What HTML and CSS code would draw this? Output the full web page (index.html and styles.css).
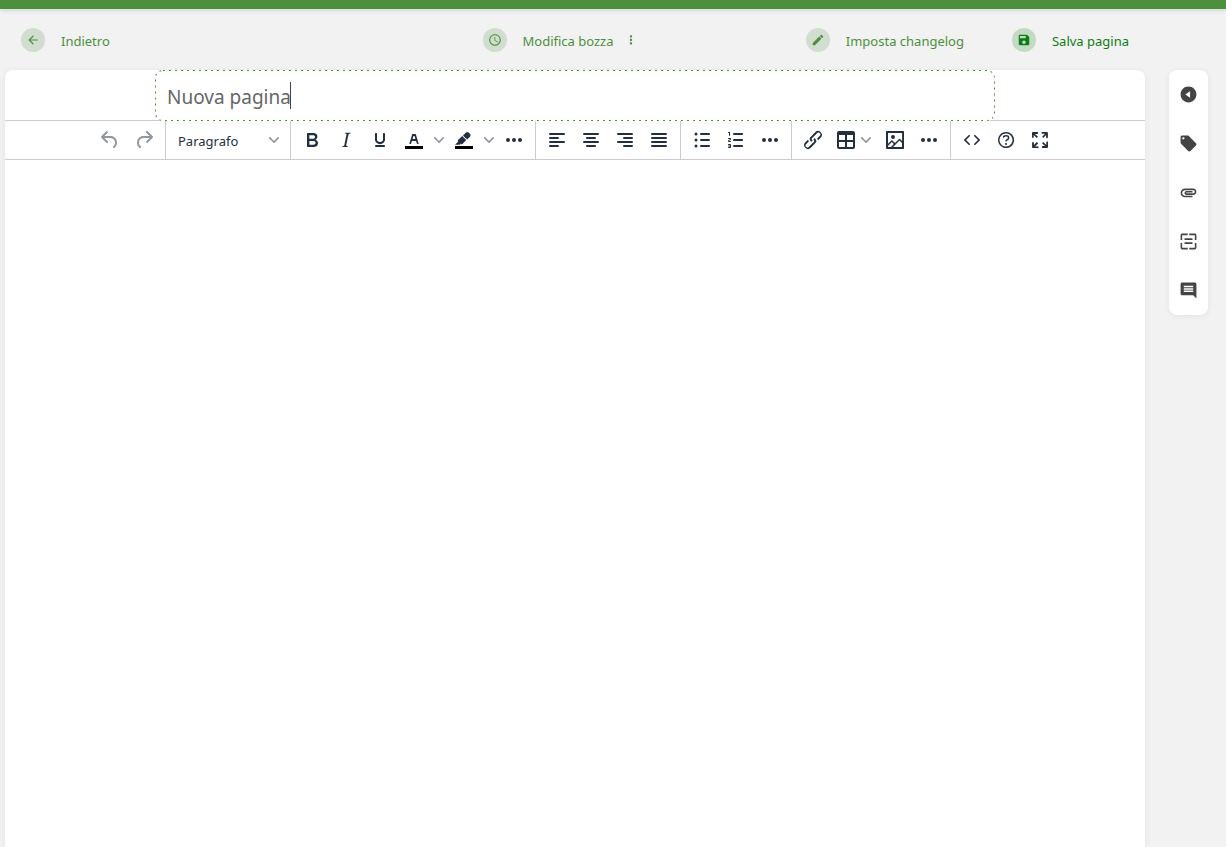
FILE: index.html
```
<!DOCTYPE html>
<html lang="it">
<head>
    <meta charset="UTF-8">
    <title>Nuova pagina</title>
    <link rel="stylesheet" href="styles.css">
</head>
<body>
    <header class="header"></header>

    <form class="page-editor">
        <div class="page-toolbar">
            <div class="toolbar-left">
                <a href="#" class="text-button">
                    <span class="circle"><svg viewBox="0 0 24 24"><path d="M20 11H7.83l5.59-5.59L12 4l-8 8 8 8 1.41-1.41L7.83 13H20v-2z"/></svg></span>
                    <span class="label">Indietro</span>
                </a>
            </div>
            <div class="toolbar-center">
                <button type="button" class="text-button">
                    <span class="circle"><svg viewBox="0 0 24 24"><path d="M11.99 2C6.47 2 2 6.48 2 12s4.47 10 9.99 10C17.52 22 22 17.52 22 12S17.52 2 11.99 2zM12 20c-4.42 0-8-3.58-8-8s3.58-8 8-8 8 3.58 8 8-3.58 8-8 8zm.5-13H11v6l5.25 3.15.75-1.23-4.5-2.67z"/></svg></span>
                    <span class="label">Modifica bozza</span>
                </button>
                <button type="button" class="more-button" aria-label="Altre opzioni">
                    <svg viewBox="0 0 24 24"><path d="M12 8c1.1 0 2-.9 2-2s-.9-2-2-2-2 .9-2 2 .9 2 2 2zm0 2c-1.1 0-2 .9-2 2s.9 2 2 2 2-.9 2-2-.9-2-2-2zm0 6c-1.1 0-2 .9-2 2s.9 2 2 2 2-.9 2-2-.9-2-2-2z"/></svg>
                </button>
            </div>
            <div class="toolbar-right">
                <button type="button" class="text-button">
                    <span class="circle"><svg viewBox="0 0 24 24"><path d="M3 17.25V21h3.75L17.81 9.94l-3.75-3.75L3 17.25zM20.71 7.04c.39-.39.39-1.02 0-1.41l-2.34-2.34c-.39-.39-1.02-.39-1.41 0l-1.83 1.83 3.75 3.75 1.83-1.83z"/></svg></span>
                    <span class="label">Imposta changelog</span>
                </button>
                <button type="submit" class="text-button save">
                    <span class="circle"><svg viewBox="0 0 24 24"><path d="M17 3H5c-1.11 0-2 .9-2 2v14c0 1.1.89 2 2 2h14c1.1 0 2-.9 2-2V7l-4-4zm-5 16c-1.66 0-3-1.34-3-3s1.34-3 3-3 3 1.34 3 3-1.34 3-3 3zm3-10H5V5h10v4z"/></svg></span>
                    <span class="label">Salva pagina</span>
                </button>
            </div>
        </div>

        <div class="workspace">
            <main class="editor-card">
                <div class="title-input">
                    <input type="text" name="name" value="Nuova pagina" aria-label="Titolo">
                    <svg class="title-outline"><rect width="100%" height="100%" rx="8"/></svg>
                    <span class="caret"></span>
                </div>

                <div class="tox-toolbar" role="toolbar">
                    <div class="tox-group">
                        <button type="button" class="tox-btn" aria-label="Annulla" disabled><svg viewBox="0 0 24 24"><path d="M6.4 8H12c3.7 0 6.2 2 6.8 5.1.6 2.7-.4 5.6-2.3 6.8a1 1 0 01-1-1.8c1.1-.6 1.8-2.7 1.4-4.6-.5-2.1-2.1-3.5-4.9-3.5H6.4l3.3 3.3a1 1 0 11-1.4 1.4l-5-5a1 1 0 010-1.4l5-5a1 1 0 011.4 1.4L6.4 8z"/></svg></button>
                        <button type="button" class="tox-btn" aria-label="Ripeti" disabled><svg viewBox="0 0 24 24"><path d="M17.6 10H12c-2.8 0-4.4 1.4-4.9 3.5-.4 2 .3 4 1.4 4.6a1 1 0 11-1 1.8c-2-1.2-2.9-4.1-2.3-6.8.6-3 3-5.1 6.8-5.1h5.6l-3.3-3.3a1 1 0 111.4-1.4l5 5a1 1 0 010 1.4l-5 5a1 1 0 01-1.4-1.4l3.3-3.3z"/></svg></button>
                    </div>
                    <div class="tox-group">
                        <div class="tox-select">
                            <select name="format" aria-label="Formato">
                                <option>Paragrafo</option>
                            </select>
                            <svg class="chevron" viewBox="0 0 10 10"><path d="M8.7 2.2c.3-.3.8-.3 1 0 .4.4.4.9 0 1.2L5.7 7.8c-.3.3-.9.3-1.2 0L.2 3.4a.8.8 0 010-1.2c.3-.3.8-.3 1.1 0L5 6l3.7-3.8z"/></svg>
                        </div>
                    </div>
                    <div class="tox-group">
                        <button type="button" class="tox-btn" aria-label="Grassetto"><svg viewBox="0 0 24 24"><path fill-rule="evenodd" d="M7.8 19c-.3 0-.5 0-.6-.2l-.2-.5V5.7c0-.2 0-.4.2-.5l.6-.2h5c1.5 0 2.7.3 3.5 1 .7.6 1.1 1.4 1.1 2.5a3 3 0 01-.6 1.9c-.4.6-1 1-1.6 1.2.4.1.9.3 1.3.6s.8.7 1 1.2c.4.4.5 1 .5 1.6 0 1.3-.4 2.3-1.3 3-.8.7-2.1 1-3.8 1H7.8zm5-8.3c.6 0 1.2-.1 1.6-.5.4-.3.6-.7.6-1.3 0-1.1-.8-1.7-2.3-1.7H9.3v3.5h3.4zm.5 6c.7 0 1.3-.1 1.7-.4.4-.4.6-.9.6-1.5s-.2-1-.7-1.4c-.4-.3-1-.4-2-.4H9.4v3.8h4z"/></svg></button>
                        <button type="button" class="tox-btn" aria-label="Corsivo"><svg viewBox="0 0 24 24"><path fill-rule="evenodd" d="M16.7 4.7l-.1.9h-.3c-.6 0-1 0-1.4.3-.3.3-.4.6-.5 1.1l-2.1 9.8v.6c0 .5.4.8 1.4.8h.2l-.2.8H8l.2-.8h.2c1.1 0 1.8-.5 2-1.5l2-9.8.1-.5c0-.6-.4-.8-1.4-.8h-.3l.2-.9h5.8z"/></svg></button>
                        <button type="button" class="tox-btn" aria-label="Sottolineato"><svg viewBox="0 0 24 24"><path fill-rule="evenodd" d="M16 5c.6 0 1 .4 1 1v5.5a4 4 0 01-.4 1.8l-1 1.4a5.3 5.3 0 01-5.5 1 5 5 0 01-1.6-1c-.5-.4-.8-.9-1.1-1.4a4 4 0 01-.4-1.8V6c0-.6.4-1 1-1s1 .4 1 1v5.5c0 .3 0 .6.2 1l.6.7a3.3 3.3 0 002.2.8 3.4 3.4 0 002.2-.8c.3-.2.4-.5.6-.8l.2-.9V6c0-.6.4-1 1-1zM8 17h8c.6 0 1 .4 1 1s-.4 1-1 1H8a1 1 0 010-2z"/></svg></button>
                        <button type="button" class="tox-btn" aria-label="Colore testo"><svg viewBox="0 0 24 24"><path class="swatch" d="M3 18h18v3H3z"/><path fill-rule="evenodd" d="M8.7 16h-.8a.5.5 0 01-.5-.6l2.7-9c.1-.3.3-.4.5-.4h2.8c.2 0 .4.1.5.4l2.7 9a.5.5 0 01-.5.6h-.8a.5.5 0 01-.4-.4l-.7-2.2c0-.3-.3-.4-.5-.4h-3.4c-.2 0-.4.1-.5.4l-.7 2.2c0 .3-.2.4-.4.4zm2.6-7.6l-.6 2a.5.5 0 00.5.6h1.6a.5.5 0 00.5-.6l-.6-2c0-.3-.3-.4-.5-.4h-.4c-.2 0-.4.1-.5.4z"/></svg></button>
                        <button type="button" class="tox-arrow" aria-label="Scegli colore testo"><svg class="chevron" viewBox="0 0 10 10"><path d="M8.7 2.2c.3-.3.8-.3 1 0 .4.4.4.9 0 1.2L5.7 7.8c-.3.3-.9.3-1.2 0L.2 3.4a.8.8 0 010-1.2c.3-.3.8-.3 1.1 0L5 6l3.7-3.8z"/></svg></button>
                        <button type="button" class="tox-btn" aria-label="Colore sfondo"><svg viewBox="0 0 24 24"><path class="swatch" d="M3 18h18v3H3z"/><path fill-rule="evenodd" d="M7.7 16.7H3l3.3-3.3-.7-.8L10.2 8l4 4.1-4 4.2c-.2.2-.6.2-.8 0l-.6-.7-1.1 1.1zm5-7.5L11 7.4l3-2.9a2 2 0 012.6 0L18 6c.7.7.7 2 0 2.7l-2.9 2.9-1.8-1.8-.5-.6"/></svg></button>
                        <button type="button" class="tox-arrow" aria-label="Scegli colore sfondo"><svg class="chevron" viewBox="0 0 10 10"><path d="M8.7 2.2c.3-.3.8-.3 1 0 .4.4.4.9 0 1.2L5.7 7.8c-.3.3-.9.3-1.2 0L.2 3.4a.8.8 0 010-1.2c.3-.3.8-.3 1.1 0L5 6l3.7-3.8z"/></svg></button>
                        <button type="button" class="tox-btn" aria-label="Altro"><svg viewBox="0 0 24 24"><path d="M6 10a2 2 0 100 4 2 2 0 000-4zm12 0a2 2 0 100 4 2 2 0 000-4zm-6 0a2 2 0 100 4 2 2 0 000-4z"/></svg></button>
                    </div>
                    <div class="tox-group">
                        <button type="button" class="tox-btn" aria-label="Allinea a sinistra"><svg viewBox="0 0 24 24"><path d="M5 5h14a1 1 0 010 2H5a1 1 0 110-2zm0 4h8a1 1 0 010 2H5a1 1 0 110-2zm0 8h8a1 1 0 010 2H5a1 1 0 010-2zm0-4h14a1 1 0 010 2H5a1 1 0 010-2z"/></svg></button>
                        <button type="button" class="tox-btn" aria-label="Centra"><svg viewBox="0 0 24 24"><path d="M5 5h14a1 1 0 010 2H5a1 1 0 110-2zm3 4h8a1 1 0 010 2H8a1 1 0 110-2zm0 8h8a1 1 0 010 2H8a1 1 0 010-2zm-3-4h14a1 1 0 010 2H5a1 1 0 010-2z"/></svg></button>
                        <button type="button" class="tox-btn" aria-label="Allinea a destra"><svg viewBox="0 0 24 24"><path d="M5 5h14a1 1 0 010 2H5a1 1 0 110-2zm6 4h8a1 1 0 010 2h-8a1 1 0 010-2zm0 8h8a1 1 0 010 2h-8a1 1 0 010-2zm-6-4h14a1 1 0 010 2H5a1 1 0 010-2z"/></svg></button>
                        <button type="button" class="tox-btn" aria-label="Giustifica"><svg viewBox="0 0 24 24"><path d="M5 5h14a1 1 0 010 2H5a1 1 0 110-2zm0 4h14a1 1 0 010 2H5a1 1 0 110-2zm0 4h14a1 1 0 010 2H5a1 1 0 010-2zm0 4h14a1 1 0 010 2H5a1 1 0 010-2z"/></svg></button>
                    </div>
                    <div class="tox-group">
                        <button type="button" class="tox-btn" aria-label="Elenco puntato"><svg viewBox="0 0 24 24"><path d="M11 5h8a1 1 0 010 2h-8a1 1 0 010-2zm0 6h8a1 1 0 010 2h-8a1 1 0 010-2zm0 6h8a1 1 0 010 2h-8a1 1 0 010-2zM4.5 6a1.5 1.5 0 113 0 1.5 1.5 0 01-3 0zm0 6a1.5 1.5 0 113 0 1.5 1.5 0 01-3 0zm0 6a1.5 1.5 0 113 0 1.5 1.5 0 01-3 0z"/></svg></button>
                        <button type="button" class="tox-btn" aria-label="Elenco numerato"><svg viewBox="0 0 24 24"><path d="M10 17h8c.6 0 1 .4 1 1s-.4 1-1 1h-8a1 1 0 010-2zm0-6h8c.6 0 1 .4 1 1s-.4 1-1 1h-8a1 1 0 010-2zm0-6h8c.6 0 1 .4 1 1s-.4 1-1 1h-8a1 1 0 110-2zM6 4v3.5c0 .3-.2.5-.5.5a.5.5 0 01-.5-.5V5h-.5a.5.5 0 010-1H6zm-1 8.8l.2.2h1.3c.3 0 .5.2.5.5s-.2.5-.5.5H4.9a1 1 0 01-.9-1V13c0-.4.3-.8.6-1l1.2-.4.2-.3a.2.2 0 00-.2-.2H4.5a.5.5 0 01-.5-.5c0-.3.2-.5.5-.5h1.6c.5 0 .9.4.9 1v.1c0 .4-.3.8-.6 1l-1.2.4-.2.3zM7 17v2c0 .6-.4 1-1 1H4.5a.5.5 0 010-1h1.2c.2 0 .3-.1.3-.3 0-.2-.1-.3-.3-.3H4.4a.4.4 0 110-.8h1.3c.2 0 .3-.1.3-.3 0-.2-.1-.3-.3-.3H4.5a.5.5 0 110-1H6c.6 0 1 .4 1 1z"/></svg></button>
                        <button type="button" class="tox-btn" aria-label="Altro"><svg viewBox="0 0 24 24"><path d="M6 10a2 2 0 100 4 2 2 0 000-4zm12 0a2 2 0 100 4 2 2 0 000-4zm-6 0a2 2 0 100 4 2 2 0 000-4z"/></svg></button>
                    </div>
                    <div class="tox-group">
                        <button type="button" class="tox-btn" aria-label="Collegamento"><svg viewBox="0 0 24 24"><path d="M6.2 12.3a1 1 0 011.4 1.4l-2 2a2 2 0 102.6 2.8l4.8-4.8a1 1 0 000-1.4 1 1 0 111.4-1.3 2.9 2.9 0 010 4L9.6 20a3.9 3.9 0 01-5.5-5.5l2-2zm11.6-.6a1 1 0 01-1.4-1.4l2-2a2 2 0 10-2.6-2.8L11 10.3a1 1 0 000 1.4A1 1 0 119.6 13a2.9 2.9 0 010-4L14.4 4a3.9 3.9 0 015.5 5.5l-2 2z"/></svg></button>
                        <button type="button" class="tox-btn tox-menu" aria-label="Tabella"><svg viewBox="0 0 24 24"><path fill-rule="evenodd" d="M19 3a2 2 0 012 2v14a2 2 0 01-2 2H5a2 2 0 01-2-2V5c0-1.1.9-2 2-2h14zM5 14v5h6v-5H5zm14 0h-6v5h6v-5zm0-7h-6v5h6V7zM5 12h6V7H5v5z"/></svg><svg class="chevron" viewBox="0 0 10 10"><path d="M8.7 2.2c.3-.3.8-.3 1 0 .4.4.4.9 0 1.2L5.7 7.8c-.3.3-.9.3-1.2 0L.2 3.4a.8.8 0 010-1.2c.3-.3.8-.3 1.1 0L5 6l3.7-3.8z"/></svg></button>
                        <button type="button" class="tox-btn" aria-label="Immagine"><svg viewBox="0 0 24 24"><path d="M5 15.7l3.3-3.2c.3-.3.7-.3 1 0L12 15l4.1-4c.3-.4.8-.4 1 0l2 1.9V5H5v10.7zM5 18V19h3l2.8-2.9-2-2L5 17.9zm14-3l-2.5-2.4-6.4 6.5H19v-4zM4 3h16c.6 0 1 .4 1 1v16c0 .6-.4 1-1 1H4a1 1 0 01-1-1V4c0-.6.4-1 1-1zm6 8a2 2 0 100-4 2 2 0 000 4z"/></svg></button>
                        <button type="button" class="tox-btn" aria-label="Altro"><svg viewBox="0 0 24 24"><path d="M6 10a2 2 0 100 4 2 2 0 000-4zm12 0a2 2 0 100 4 2 2 0 000-4zm-6 0a2 2 0 100 4 2 2 0 000-4z"/></svg></button>
                    </div>
                    <div class="tox-group">
                        <button type="button" class="tox-btn" aria-label="Codice sorgente"><svg viewBox="0 0 24 24"><path d="M9.8 15.7c.3.3.3.8 0 1-.3.4-.9.4-1.2 0l-4.4-4.1a.8.8 0 010-1.2l4.4-4.2c.3-.3.9-.3 1.2 0 .3.3.3.8 0 1.1L6 12l3.8 3.7zM14.2 15.7c-.3.3-.3.8 0 1 .4.4.9.4 1.2 0l4.4-4.1c.3-.3.3-.9 0-1.2l-4.4-4.2a.8.8 0 00-1.2 0c-.3.3-.3.8 0 1.1L18 12l-3.8 3.7z"/></svg></button>
                        <button type="button" class="tox-btn" aria-label="Aiuto"><svg viewBox="0 0 24 24"><g fill-rule="evenodd"><path d="M12 5.5a6.5 6.5 0 00-6 9 6.3 6.3 0 001.4 2l1 1a6.3 6.3 0 003.6 1 6.5 6.5 0 006-9 6.3 6.3 0 00-1.4-2l-1-1a6.3 6.3 0 00-3.6-1zM12 4a7.8 7.8 0 015.7 2.3A8 8 0 1112 4z"/><path d="M9.6 9.7a.7.7 0 01-.7-.8c0-1.1 1.5-1.8 3.2-1.8 1.8 0 3.2.8 3.2 2.4 0 1.4-.4 2.1-1.5 2.8-.2 0-.3.1-.3.2a2 2 0 00-.8.8.8.8 0 01-1.4-.6c.3-.7.8-1 1.3-1.5l.4-.2c.7-.4.8-.6.8-1.5 0-.5-.6-.9-1.7-.9-.5 0-1 .1-1.4.3-.2 0-.3.1-.3.2v-.2c0 .4-.4.8-.8.8z"/><circle cx="12" cy="16" r="1"/></g></svg></button>
                        <button type="button" class="tox-btn" aria-label="Schermo intero"><svg viewBox="0 0 24 24"><path d="M15.3 10l-1.2-1.3 2.9-3h-2.3a.9.9 0 110-1.7H19c.5 0 .9.4.9.9v4.4a.9.9 0 11-1.8 0V7l-2.9 3zm0 4l3 3v-2.3a.9.9 0 111.7 0V19c0 .5-.4.9-.9.9h-4.4a.9.9 0 110-1.8H17l-3-2.9 1.3-1.2zM10 15.4l-2.9 3h2.3a.9.9 0 110 1.7H5a.9.9 0 01-.9-.9v-4.4a.9.9 0 111.8 0V17l2.9-3 1.2 1.3zM8.7 10L5.7 7v2.3a.9.9 0 01-1.7 0V5c0-.5.4-.9.9-.9h4.4a.9.9 0 010 1.8H7l3 2.9-1.3 1.2z"/></svg></button>
                    </div>
                </div>

                <div class="content-area" contenteditable="true" role="textbox" aria-label="Contenuto"></div>
            </main>

            <aside class="toolbox">
                <button type="button" aria-label="Espandi"><svg viewBox="0 0 24 24"><path fill-rule="evenodd" d="M12 2C6.48 2 2 6.48 2 12s4.48 10 10 10 10-4.48 10-10S17.52 2 12 2zm2 14L8 12l6-4z"/></svg></button>
                <button type="button" aria-label="Etichette"><svg viewBox="0 0 24 24"><path d="M21.41 11.58l-9-9C12.05 2.22 11.55 2 11 2H4c-1.1 0-2 .9-2 2v7c0 .55.22 1.05.59 1.42l9 9c.36.36.86.58 1.41.58s1.05-.22 1.41-.59l7-7c.37-.36.59-.86.59-1.41s-.23-1.06-.59-1.42zM5.5 7C4.67 7 4 6.33 4 5.5S4.67 4 5.5 4 7 4.67 7 5.5 6.33 7 5.5 7z"/></svg></button>
                <button type="button" aria-label="Allegati"><svg viewBox="0 0 24 24"><path d="M2 12.5C2 9.46 4.46 7 7.5 7H18c2.21 0 4 1.79 4 4s-1.79 4-4 4H9.5C8.12 15 7 13.88 7 12.5S8.12 10 9.5 10H17v2H9.41c-.55 0-.55 1 0 1H18c1.1 0 2-.9 2-2s-.9-2-2-2H7.5C5.57 9 4 10.57 4 12.5S5.57 16 7.5 16H17v2H7.5C4.46 18 2 15.54 2 12.5z"/></svg></button>
                <button type="button" aria-label="Modelli"><svg viewBox="0 0 24 24"><path d="M2 4c0-1.1.9-2 2-2h7v2H4v6H2zM13 2h7c1.1 0 2 .9 2 2v6h-2V4h-7zM2 14h2v6h7v2H4c-1.1 0-2-.9-2-2zM20 14h2v6c0 1.1-.9 2-2 2h-7v-2h7zM7 8h10v2H7zM7 13h10v2H7z"/></svg></button>
                <button type="button" aria-label="Commenti"><svg viewBox="0 0 24 24"><path d="M21.99 4c0-1.1-.89-2-1.99-2H4c-1.1 0-2 .9-2 2v12c0 1.1.9 2 2 2h14l4 4-.01-18zM18 14H6v-2h12v2zm0-3H6V9h12v2zm0-3H6V6h12v2z"/></svg></button>
            </aside>
        </div>
    </form>
</body>
</html>
```
FILE: styles.css
```
* {
    box-sizing: border-box;
}
body {
    margin: 0;
    background-color: #f2f2f2;
    font-family: "Noto Sans", "Open Sans", sans-serif;
    font-size: 13px;
    color: #444;
}
button, input, select {
    font: inherit;
    color: inherit;
}
button {
    padding: 0;
    border: none;
    background: none;
    cursor: pointer;
}
svg {
    display: block;
    fill: currentColor;
}
.header {
    height: 9px;
    background-color: #4e8f3f;
    box-shadow: 0 1px 5px rgba(0,0,0,0.15);
}
.page-editor {
    display: flex;
    flex-direction: column;
    min-height: calc(100vh - 9px);
}

/* Top action bar */
.page-toolbar {
    display: grid;
    grid-template-columns: 1fr auto 1fr;
    align-items: center;
    height: 61px;
    padding: 0 81px 0 5px;
}
.toolbar-left, .toolbar-center, .toolbar-right {
    display: flex;
    align-items: center;
}
.toolbar-center {
    padding-right: 46px;
}
.toolbar-center .text-button {
    padding-right: 10px;
}
.toolbar-right {
    justify-content: flex-end;
    gap: 16px;
}
.text-button {
    display: flex;
    align-items: center;
    gap: 16px;
    padding: 0 16px;
    color: #4e8f3f;
    line-height: 24px;
    text-decoration: none;
    white-space: nowrap;
}
.text-button.save {
    color: #0f7d15;
}
.label {
    padding-top: 2px;
}
.circle {
    display: grid;
    place-items: center;
    width: 24px;
    height: 24px;
    border-radius: 50%;
    background-color: #d1ddcf;
}
.save .circle {
    background-color: #c4dac5;
}
.circle svg {
    width: 14px;
    height: 14px;
}
.more-button {
    color: #4e8f3f;
}
.more-button svg {
    width: 14px;
    height: 14px;
}

/* Editor */
.workspace {
    flex: 1;
    display: flex;
    align-items: stretch;
    gap: 24px;
    padding: 0 18px 0 5px;
}
.editor-card {
    flex: 1;
    display: flex;
    flex-direction: column;
    background-color: #fff;
    border-radius: 8px 8px 0 0;
    box-shadow: 0 1px 6px rgba(0,0,0,0.07);
}
.title-input {
    position: relative;
    width: 100%;
    max-width: 840px;
    margin: 0 auto;
}
.title-input input {
    display: block;
    width: 100%;
    height: 51px;
    padding: 2px 12px 0;
    border: none;
    border-radius: 8px;
    outline: none;
    background-color: #fff;
    color: #666;
    font-size: 19px;
}
.title-outline {
    position: absolute;
    inset: 0;
    width: 100%;
    height: 100%;
    border-radius: 8px;
    pointer-events: none;
}
/* half of the 2px stroke is clipped, leaving a 1px dashed line */
.title-outline rect {
    fill: none;
    stroke: #4e8f3f;
    stroke-width: 2px;
    stroke-dasharray: 2 4;
}
.caret {
    position: absolute;
    top: 12px;
    left: 135px;
    width: 1px;
    height: 27px;
    background-color: #444;
}
.tox-toolbar {
    display: flex;
    justify-content: center;
    height: 40px;
    margin-top: -1px;
    border-top: 1px solid #ccc;
    border-bottom: 1px solid #ccc;
    color: #222f3e;
}
.tox-group {
    display: flex;
    align-items: center;
    padding: 0 4px;
}
.tox-group + .tox-group {
    border-left: 1px solid #ccc;
}
.tox-btn {
    display: flex;
    align-items: center;
    justify-content: center;
    width: 34px;
    height: 34px;
}
.tox-btn svg {
    width: 24px;
    height: 24px;
}
.tox-btn:disabled {
    color: rgba(34,47,62,0.5);
}
.tox-arrow {
    display: grid;
    place-items: center;
    width: 16px;
    height: 34px;
}
.tox-btn.tox-menu {
    justify-content: flex-start;
    gap: 3px;
    width: 48px;
    padding-left: 4px;
}
.tox-group svg.chevron {
    width: 10px;
    height: 10px;
    fill: #9096a0;
}
.swatch {
    fill: #000;
}
.tox-select {
    position: relative;
    width: 116px;
}
.tox-select select {
    width: 100%;
    height: 34px;
    padding: 2px 8px 0;
    border: none;
    background: none;
    appearance: none;
}
.tox-select .chevron {
    position: absolute;
    top: 12px;
    right: 7px;
    pointer-events: none;
}
.content-area {
    flex: 1;
    outline: none;
}

/* Side toolbox */
.toolbox {
    align-self: flex-start;
    display: flex;
    flex-direction: column;
    width: 39px;
    background-color: #fff;
    border-radius: 8px;
    box-shadow: 0 1px 6px rgba(0,0,0,0.07);
    color: #444;
}
.toolbox button {
    display: grid;
    place-items: center;
    height: 49px;
}
.toolbox svg {
    width: 19px;
    height: 19px;
}
```
